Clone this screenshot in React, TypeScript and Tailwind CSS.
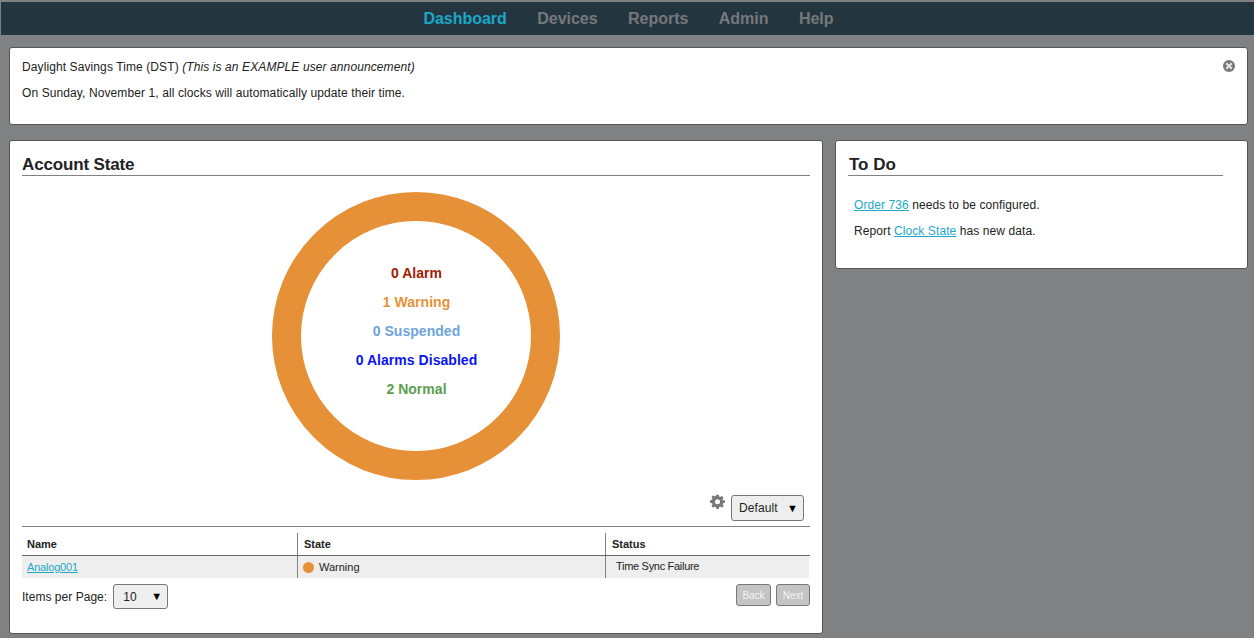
export default function App() {
  const nav = ["Dashboard", "Devices", "Reports", "Admin", "Help"];
  const states = [
    ["0 Alarm", "text-[#a02000]"],
    ["1 Warning", "text-[#e69138]"],
    ["0 Suspended", "text-[#6ea3dc]"],
    ["0 Alarms Disabled", "text-[#0a14f0]"],
    ["2 Normal", "text-[#5a9e50]"],
  ];
  return (
    <div className="h-[638px] w-[1254px] overflow-hidden bg-[#808183] font-['Liberation_Sans',Arial,sans-serif] text-[#222]">
      <header className="flex h-[35px] items-center justify-center gap-[30.5px] border-t-2 border-l border-[#808183] bg-[#233640] pl-[2px] text-[16px] font-bold tracking-[-0.03px] text-[#77787b]">
        {nav.map((n, i) => (
          <span key={n} className={i === 0 ? "text-[#1ca8c9]" : ""}>{n}</span>
        ))}
      </header>

      <main className="flex flex-col gap-[15px] pt-[12px] pr-[6px] pl-[9px]">
        <section className="relative h-[78px] rounded-[3px] border border-[#555] bg-white px-[12px] pt-[12px] text-[12px] leading-[14px] tracking-[0.1px]">
          <p>Daylight Savings Time (DST) <em>(This is an EXAMPLE user announcement)</em></p>
          <p className="mt-[12px]">On Sunday, November 1, all clocks will automatically update their time.</p>
          <svg viewBox="0 0 12 12" className="absolute top-[12px] right-[12px] h-[12px] w-[12px]">
            <circle cx="6" cy="6" r="6" fill="#77787b" />
            <path d="M3.2 3.2 8.800 8.800M8.800 3.200 3.200 8.800" stroke="#e8e8e8" strokeWidth="2" />
          </svg>
        </section>

        <div className="flex items-start gap-[12px]">
          <section className="h-[494px] w-[814px] shrink-0 rounded-[3px] border border-[#555] bg-white px-[12px]">
            <h2 className="mt-[14px] h-[21px] border-b border-[#808183] text-[17px] leading-[19px] font-bold tracking-[-0.15px]">Account State</h2>
            <div className="relative mt-[16px] flex h-[288px] justify-center">
              <svg viewBox="0 0 288 288" className="h-[288px] w-[288px]">
                <circle cx="144" cy="144" r="129.5" fill="none" stroke="#e69138" strokeWidth="29" />
              </svg>
              <div className="absolute inset-0 flex flex-col items-center justify-center gap-[12px] pb-[10px] pl-[1px] text-[14px] leading-[17px] font-bold tracking-[0.04px]">
                {states.map(([label, color]) => (
                  <span key={label} className={color}>{label}</span>
                ))}
              </div>
            </div>
            <div className="mt-[15px] flex h-[26px] items-start justify-end gap-[6px] pr-[6px]">
              <svg viewBox="0 0 24 24" className="mt-[-1px] h-[15px] w-[15px]" fill="#77787b">
                <path d="M10 1h4l.6 3.100 1.700.7 2.600-1.800 2.900 2.900-1.800 2.600.7 1.700L24 10v4l-3.100.6-.7 1.700 1.800 2.600-2.900 2.900-2.600-1.800-1.700.7L14 24h-4l-.6-3.100-1.700-.7L5.100 22l-2.900-2.900 1.800-2.600-.7-1.700L0 14v-4l3.300-.7.7-1.700-1.800-2.600 2.900-2.900 2.600 1.800 1.700-.7L10 1Zm2 7.500a4 4 0 1 0 0 8 4 4 0 0 0 0-8Z" fillRule="evenodd" />
              </svg>
              <div className="flex h-[26px] w-[73px] items-center justify-between rounded-[3px] border border-[#777] bg-[#eee] pr-[5px] pl-[7px] text-[12px] tracking-[0.1px]">
                <span>Default</span>
                <span className="text-[11px] text-black">▼</span>
              </div>
            </div>
            <div className="mt-[5px] border-t border-[#808183] pt-[6px]">
              <div className="flex h-[23px] border-b border-[#666] text-[11px] font-bold">
                <div className="w-[275px] pl-[5px] leading-[23px]">Name</div>
                <div className="w-[308px] border-l border-[#808183] pl-[6px] leading-[23px]">State</div>
                <div className="flex-1 border-l border-[#808183] pl-[6px] leading-[23px]">Status</div>
              </div>
              <div className="flex h-[22px] w-[787px] bg-[#eee] text-[11px]">
                <div className="w-[275px] pl-[5px] leading-[22px] tracking-[-0.2px]">
                  <a className="text-[#1ca8c9] underline">Analog001</a>
                </div>
                <div className="flex w-[308px] items-center gap-[5px] border-l border-[#808183] pl-[5px]">
                  <span className="mt-[1px] h-[11px] w-[11px] rounded-full bg-[#e69138]" />
                  <span>Warning</span>
                </div>
                <div className="flex-1 border-l border-[#808183] pl-[10px] leading-[20px] tracking-[-0.3px]">Time Sync Failure</div>
              </div>
            </div>
            <div className="mt-[6px] flex items-start justify-between">
              <div className="flex items-center gap-[6px] text-[12px] tracking-[0.03px]">
                <span>Items per Page:</span>
                <div className="flex h-[25px] w-[55px] items-center justify-between rounded-[3px] border border-[#777] bg-[#eee] pr-[5px] pl-[9px]">
                  <span>10</span>
                  <span className="text-[11px] text-black">▼</span>
                </div>
              </div>
              <div className="flex gap-[5px] text-[10px] text-[#f4f4f4]">
                <div className="flex h-[22px] w-[35px] items-center justify-center rounded-[3px] border border-[#777] bg-[#c4c4c4]">Back</div>
                <div className="flex h-[22px] w-[34px] items-center justify-center rounded-[3px] border border-[#777] bg-[#c4c4c4]">Next</div>
              </div>
            </div>
          </section>

          <section className="h-[129px] w-[413px] shrink-0 rounded-[3px] border border-[#555] bg-white pr-[24px] pl-[12px]">
            <h2 className="mt-[14px] h-[21px] border-b border-[#808183] pl-[1px] text-[17px] leading-[19px] font-bold">To Do</h2>
            <div className="mt-[22px] pl-[6px] text-[12px] leading-[14px] tracking-[0.09px]">
              <p><a className="text-[#1ca8c9] underline">Order 736</a> needs to be configured.</p>
              <p className="mt-[12px]">Report <a className="text-[#1ca8c9] underline">Clock State</a> has new data.</p>
            </div>
          </section>
        </div>
      </main>
    </div>
  );
}
